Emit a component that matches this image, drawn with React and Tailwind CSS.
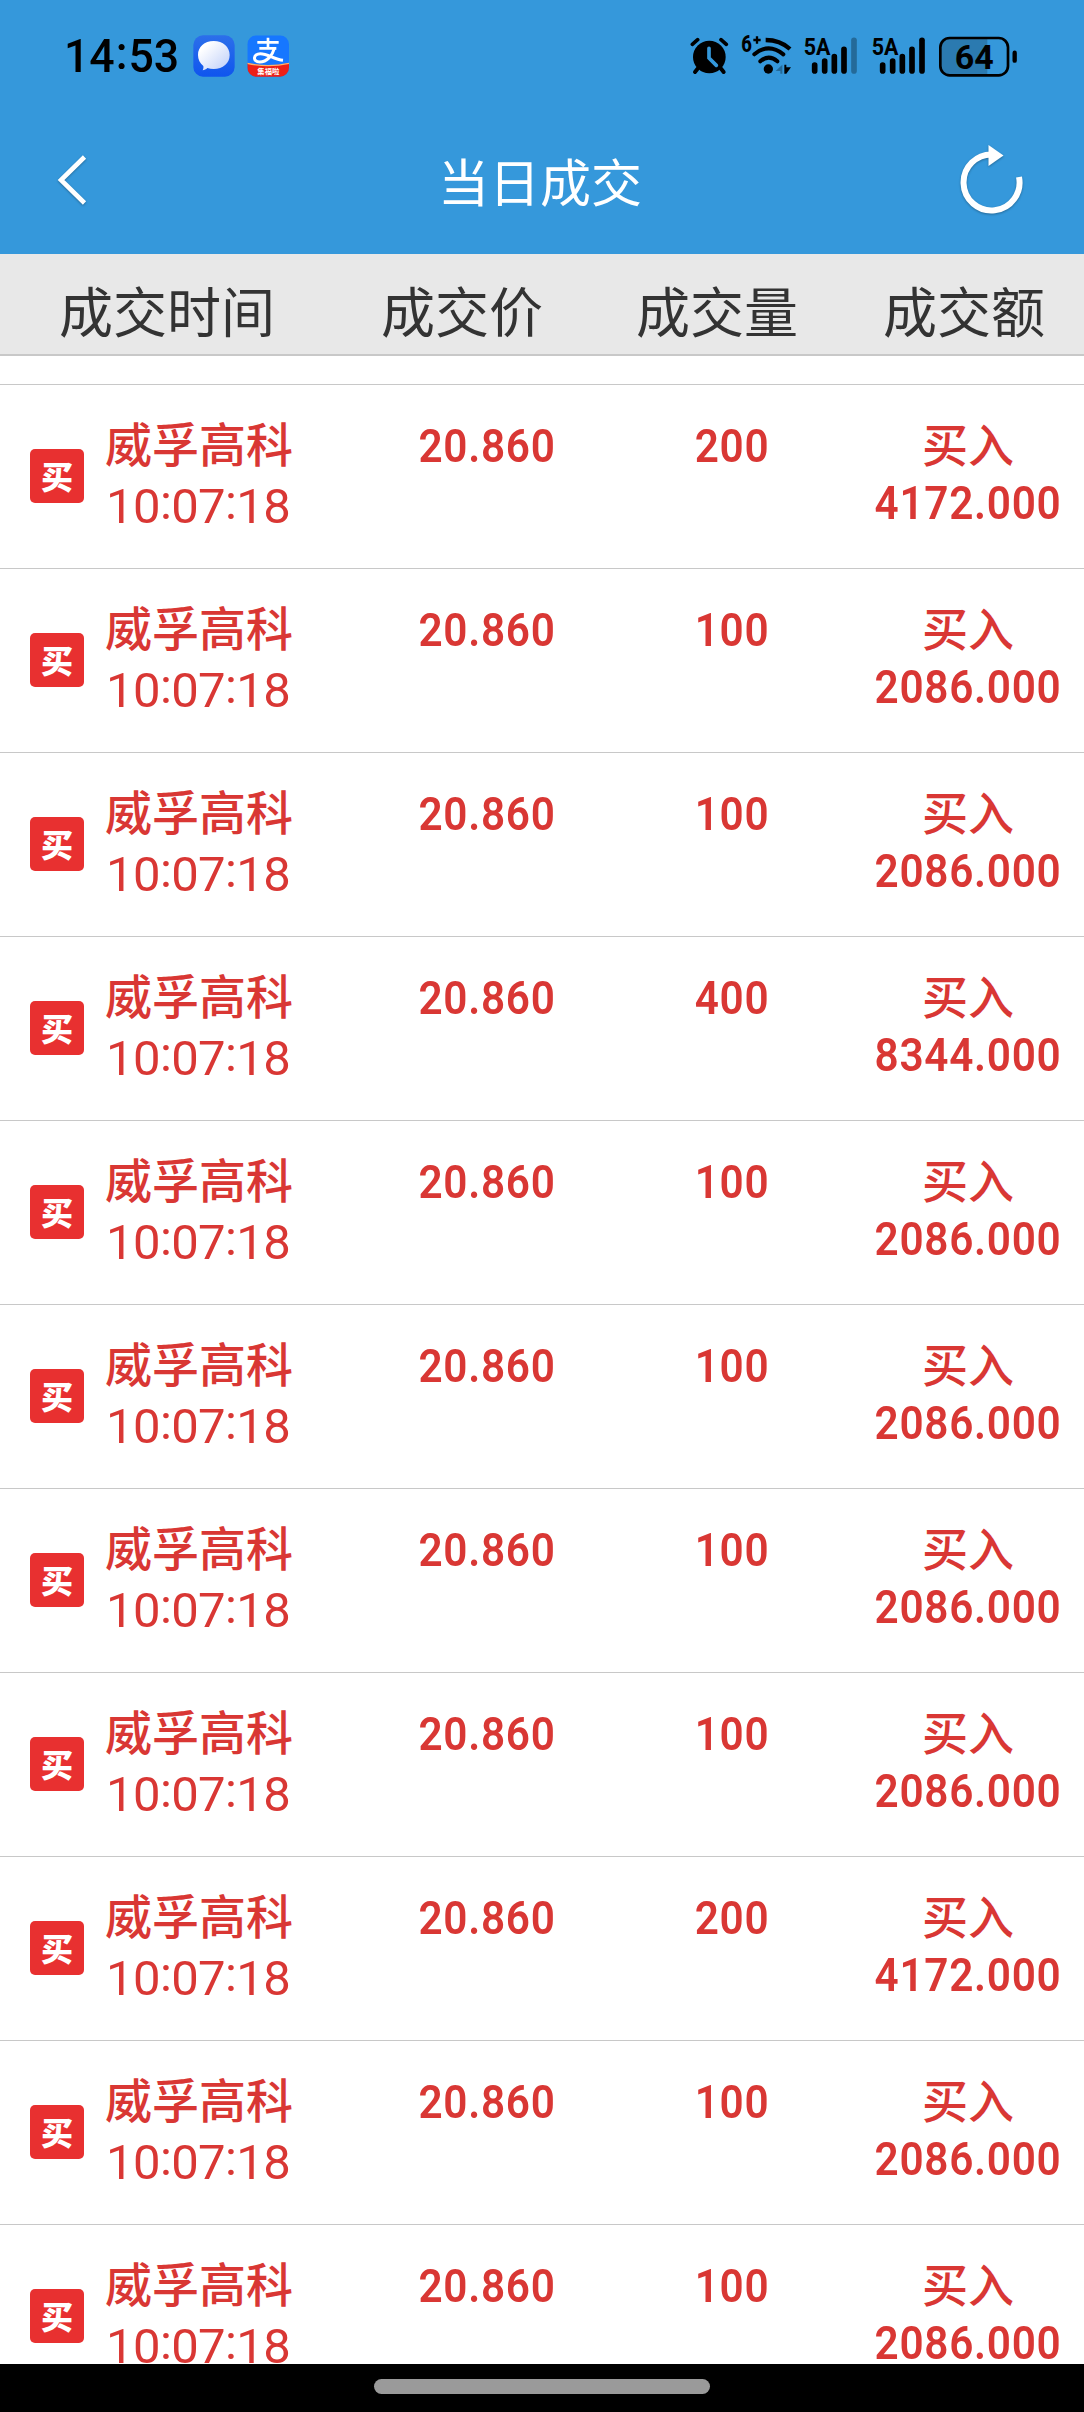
const trades = [
  { qty: '200', amount: '4172.000' },
  { qty: '100', amount: '2086.000' },
  { qty: '100', amount: '2086.000' },
  { qty: '400', amount: '8344.000' },
  { qty: '100', amount: '2086.000' },
  { qty: '100', amount: '2086.000' },
  { qty: '100', amount: '2086.000' },
  { qty: '100', amount: '2086.000' },
  { qty: '200', amount: '4172.000' },
  { qty: '100', amount: '2086.000' },
  { qty: '100', amount: '2086.000' },
].map((t, id) => ({ id, name: '威孚高科', time: '10:07:18', price: '20.860', side: '买入', ...t }));

const numClass = "flex justify-center font-['Roboto',sans-serif] font-semibold text-[47px] leading-[48px] tracking-[0.8px] scale-x-[0.9] whitespace-nowrap";

const AlarmIcon = () => (
  <svg className="w-[40px] h-[45px]" viewBox="60 70 120 135" fill="none" strokeLinecap="round">
    <circle cx="118" cy="142" r="49" fill="#000" />
    <path d="M67 104 L83 90 M153 90 L169 104" stroke="#000" strokeWidth="11" />
    <path d="M84 176 L75 187 M152 176 L161 187" stroke="#000" strokeWidth="12" />
    <path d="M117 116 V145 L139 167" stroke="#3498db" strokeWidth="11" />
  </svg>
);

const WifiIcon = () => (
  <svg className="w-[52px] h-[45px] overflow-visible" viewBox="210 70 156 135" fill="none" strokeLinecap="round">
    <text x="214" y="128" fontSize="72" fontWeight="800" textLength="32" lengthAdjust="spacingAndGlyphs" fill="#000" className="font-['Roboto',sans-serif]">6</text>
    <path d="M250 91 H272 M261 80 V102" stroke="#000" strokeWidth="7" strokeLinecap="butt" />
    <path d="M287 91 Q330 91 360 118" stroke="#000" strokeWidth="13" strokeLinecap="butt" />
    <path d="M253 134 Q296 98 340 134" stroke="#000" strokeWidth="12" />
    <path d="M271 155 Q296 133 322 155" stroke="#000" strokeWidth="12" />
    <circle cx="295" cy="178" r="14" fill="#000" />
    <path d="M317 184 L337 165 V192 H331 V184Z" fill="#246a99" />
    <path d="M343 165 H349 V173 H363 L349 192 H343Z" fill="#000" />
  </svg>
);

const SignalIcon = ({ weak }) => (
  <svg className="w-[55px] h-[45px]" viewBox="0 70 165 135" fill="none" strokeLinecap="round">
    <text x="2" y="135" fontSize="72" fontWeight="700" textLength="80" lengthAdjust="spacingAndGlyphs" fill="#000" className="font-['Roboto',sans-serif]">5A</text>
    <path d="M35 166 V184 M65 154 V184 M94 141 V184 M123 119 V184" stroke="#000" strokeWidth="17" />
    <path d="M153 92 V184" stroke={weak ? '#246a99' : '#000'} strokeWidth="17" />
  </svg>
);

const BatteryIcon = () => (
  <svg className="w-[80px] h-[45px]" viewBox="804 70 240 135">
    <path d="M836 88 H952 V194 H836 Q813 194 813 170 V112 Q813 88 836 88Z" fill="#2b7ab0" />
    <rect x="811" y="85" width="203" height="112" rx="28" fill="none" stroke="#000" strokeWidth="8" />
    <path d="M1034 129 V153" stroke="#000" strokeWidth="13" strokeLinecap="round" />
    <text x="913" y="179" textAnchor="middle" fontSize="102" fontWeight="700" fill="#000" className="font-['Roboto',sans-serif]">64</text>
  </svg>
);

const MessageIcon = () => (
  <svg className="w-[42px] h-[42px]" viewBox="460 75 126 126">
    <defs>
      <linearGradient id="msgBg" x1="0" y1="0" x2="0" y2="1">
        <stop offset="0" stopColor="#2c6fea" />
        <stop offset="1" stopColor="#0f55ee" />
      </linearGradient>
      <linearGradient id="msgBubble" x1="0" y1="0" x2="1" y2="1">
        <stop offset="0.2" stopColor="#fff" />
        <stop offset="1" stopColor="#bccdf9" />
      </linearGradient>
    </defs>
    <rect x="461" y="76" width="124" height="124" rx="29" fill="url(#msgBg)" />
    <path d="M522 93 C550 93 570 111 570 135 C570 160 550 177 522 177 C515 177 509 176 503 174 C499 178 494 180 489 181 C491 177 492 173 491 168 C481 160 475 149 475 135 C475 111 494 93 522 93Z" fill="url(#msgBubble)" />
  </svg>
);

const AlipayIcon = () => (
  <svg className="w-[42px] h-[42px]" viewBox="620 75 126 126">
    <defs>
      <clipPath id="payClip"><rect x="621" y="76" width="125" height="124" rx="27" /></clipPath>
    </defs>
    <g clipPath="url(#payClip)">
      <rect x="621" y="76" width="125" height="125" fill="#1677ff" />
      <path d="M621 159 Q684 173 746 159 V201 H621Z" fill="#ee1f16" />
      <path d="M621 160 Q684 174 746 160" stroke="#ffb36b" strokeWidth="4" fill="none" />
    </g>
    <g stroke="#fff" fill="none">
      <path d="M651 97 H715 M657 115 H708 M683 83 V115" strokeWidth="8" />
      <path d="M702 115 C696 137 680 156 658 156 C636 156 638 131 660 131 C682 131 702 148 728 151" strokeWidth="9" />
    </g>
    <text x="684" y="193" textAnchor="middle" fontSize="22" fontWeight="700" fill="#fff" className="font-['Noto_Sans_CJK_SC',sans-serif]">集福啦</text>
  </svg>
);

const StatusBar = () => (
  <div className="flex items-start h-[112px] pt-[33px] pl-[64px] pr-[66px]">
    <div className="flex w-[129px] h-[45px] origin-left scale-x-[0.97] font-['Roboto',sans-serif] font-medium text-[46px] leading-[46px] text-black">
      <span>14</span>
      <span className="-mt-[3px] px-[1px]">:</span>
      <span>53</span>
    </div>
    <div className="flex gap-[12px] pt-[2px]">
      <MessageIcon />
      <AlipayIcon />
    </div>
    <div className="flex ml-auto">
      <AlarmIcon />
      <div className="ml-[10px] flex"><WifiIcon /></div>
      <div className="ml-[11px] flex"><SignalIcon weak /></div>
      <div className="ml-[13px] flex"><SignalIcon /></div>
      <div className="ml-[12px] flex"><BatteryIcon /></div>
    </div>
  </div>
);

const TitleBar = () => (
  <div className="flex items-start justify-between h-[142px] pl-[54px] pr-[60px] text-white">
    <svg className="w-[40px] h-[56px] mt-[40px] drop-shadow-[0_1px_1px_rgba(0,0,0,0.3)]" viewBox="0 0 40 56" fill="none">
      <path d="M30.5 5 L7 28 L30.5 51" stroke="currentColor" strokeWidth="4.6" />
    </svg>
    <h1 className="pl-[30px] pt-[38px] text-[51px] leading-[60px]">当日成交</h1>
    <svg className="w-[68px] h-[76px] mt-[32px] drop-shadow-[0_1px_1px_rgba(0,0,0,0.3)]" viewBox="0 0 68 76" fill="none">
      <path d="M37 10.5 A28 28 0 1 0 63 33" stroke="currentColor" strokeWidth="6" />
      <path d="M32.5 1 L47.5 11.5 L32.5 22Z" fill="currentColor" />
    </svg>
  </div>
);

const TradeRow = ({ trade }) => (
  <li className="grid grid-cols-[105px_279px_206px_284px_188px] shrink-0 h-[184px] border-t border-[#c8c8c8] text-[#d93734]">
    <div className="pl-[30px] pt-[64px]">
      <span className="flex justify-center w-[54px] h-[54px] rounded-[5px] bg-[#e83030] text-white text-[32px] leading-[52px] font-black">买</span>
    </div>
    <div className="pt-[33px]">
      <p className="text-[47px] leading-[48px] font-medium">{trade.name}</p>
      <div className="flex mt-[17px] pl-[1px] font-['Roboto',sans-serif] text-[49px] leading-[48px] tracking-[-0.6px]">
        {trade.time.split(/(:)/).map((part, i) => (
          <span key={i} className={part === ':' ? "-mt-[4px]" : ""}>{part}</span>
        ))}
      </div>
    </div>
    <p className={numClass + " pt-[37px]"}>{trade.price}</p>
    <p className={numClass + " pt-[37px]"}>{trade.qty}</p>
    <div className="pt-[33px]">
      <p className="text-[46px] leading-[48px] font-medium text-center">{trade.side}</p>
      <p className={numClass + " mt-[13px]"}>{trade.amount}</p>
    </div>
  </li>
);

const App = () => {
  return (
    <div className="flex flex-col w-[1084px] h-[2412px] overflow-hidden bg-white font-['Noto_Sans_CJK_SC',sans-serif]">
      <header className="shrink-0 bg-[#3598db]">
        <StatusBar />
        <TitleBar />
      </header>

      <div className="flex shrink-0 h-[102px] pl-[59px] pt-[26px] bg-[#e8e8e8] border-b-2 border-[#c8c8c8] text-[#333] text-[54px] leading-[60px] whitespace-nowrap">
        <span className="w-[322px]">成交时间</span>
        <span className="w-[255px]">成交价</span>
        <span className="w-[247px]">成交量</span>
        <span>成交额</span>
      </div>

      <ul className="flex flex-col flex-1 min-h-0 overflow-hidden pt-[28px]">
        {trades.map(t => <TradeRow key={t.id} trade={t} />)}
      </ul>

      {/* Gesture bar */}
      <div className="flex justify-center shrink-0 h-[48px] pt-[15px] bg-black">
        <div className="w-[336px] h-[15px] rounded-full bg-[#9a9a9a]" />
      </div>
    </div>
  );
};

export default App;
